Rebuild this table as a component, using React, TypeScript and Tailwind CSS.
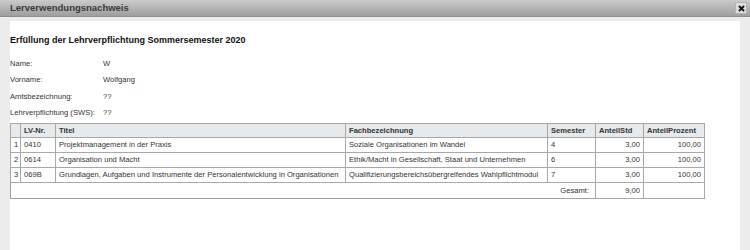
import React from "react";

interface Row {
  nr: string;
  titel: string;
  fach: string;
  semester: string;
  std: string;
  prozent: string;
}

const rows: Row[] = [
  {
    nr: "0410",
    titel: "Projektmanagement in der Praxis",
    fach: "Soziale Organisationen im Wandel",
    semester: "4",
    std: "3,00",
    prozent: "100,00",
  },
  {
    nr: "0614",
    titel: "Organisation und Macht",
    fach: "Ethik/Macht in Gesellschaft, Staat und Unternehmen",
    semester: "6",
    std: "3,00",
    prozent: "100,00",
  },
  {
    nr: "069B",
    titel:
      "Grundlagen, Aufgaben und Instrumente der Personalentwicklung in Organisationen",
    fach: "Qualifizierungsbereichsübergreifendes Wahlpflichtmodul",
    semester: "7",
    std: "3,00",
    prozent: "100,00",
  },
];

const info: [string, string][] = [
  ["Name:", "W"],
  ["Vorname:", "Wolfgang"],
  ["Amtsbezeichnung:", "??"],
  ["Lehrverpflichtung (SWS):", "??"],
];

const th = "border border-[#a8a8a8] bg-[#e6eaed] px-[3px] text-left font-bold";
const td = "border border-[#a8a8a8] px-[3px] whitespace-nowrap overflow-hidden";

export default function App() {
  return (
    <div className="w-[750px] h-[250px] bg-[#ececec] font-['Liberation_Sans',Arial,sans-serif] text-[#333] overflow-hidden">
      {/* Dialog title bar */}
      <div className="h-[17px] flex items-center justify-between pl-[10px] pr-[3px] bg-gradient-to-b from-[#cbcbcb] to-[#9e9e9e] border-b border-[#8e8e8e]">
        <span className="text-[9.5px] font-bold text-[#3a3a3a]">Lerverwendungsnachweis</span>
        <button className="w-[12px] h-[12px] flex items-center justify-center bg-[#dcdcdc] border border-[#b5b5b5]">
          <svg width="7" height="7" viewBox="0 0 7 7">
            <path d="M1 1 L6 6 M6 1 L1 6" stroke="#111" strokeWidth="1.8" />
          </svg>
        </button>
      </div>

      <div className="mt-[4px] ml-[10px] w-[730px] h-[229px] bg-white pt-[12px]">
        <h1 className="text-[9px] font-bold text-[#111] leading-[14px]">
          Erfüllung der Lehrverpflichtung Sommersemester 2020
        </h1>

        <div className="mt-[8px] text-[7.6px]">
          {info.map(([label, value]) => (
            <div key={label} className="flex h-[16.5px] items-center">
              <span className="w-[93px]">{label}</span>
              <span>{value}</span>
            </div>
          ))}
        </div>

        <table className="mt-[2px] w-[694px] table-fixed border-collapse border border-[#a0a0a0] text-[7.6px]">
          <colgroup>
            <col className="w-[10px]" />
            <col className="w-[35px]" />
            <col className="w-[290px]" />
            <col className="w-[202px]" />
            <col className="w-[48px]" />
            <col className="w-[48px]" />
            <col className="w-[61px]" />
          </colgroup>
          <thead>
            <tr className="h-[14px]">
              <th className={th}></th>
              <th className={th}>LV-Nr.</th>
              <th className={th}>Titel</th>
              <th className={th}>Fachbezeichnung</th>
              <th className={th}>Semester</th>
              <th className={th}>AnteilStd</th>
              <th className={th}>AnteilProzent</th>
            </tr>
          </thead>
          <tbody>
            {rows.map((r, i) => (
              <tr key={r.nr} className="h-[15px]">
                <td className={`${td} px-[2px]`}>{i + 1}</td>
                <td className={td}>{r.nr}</td>
                <td className={td}>{r.titel}</td>
                <td className={td}>{r.fach}</td>
                <td className={td}>{r.semester}</td>
                <td className={`${td} text-right`}>{r.std}</td>
                <td className={`${td} text-right`}>{r.prozent}</td>
              </tr>
            ))}
            <tr className="h-[16px]">
              <td colSpan={5} className="px-[6px] text-right">
                Gesamt:
              </td>
              <td className={`${td} text-right`}>9,00</td>
              <td className={td}></td>
            </tr>
          </tbody>
        </table>
      </div>
    </div>
  );
}
